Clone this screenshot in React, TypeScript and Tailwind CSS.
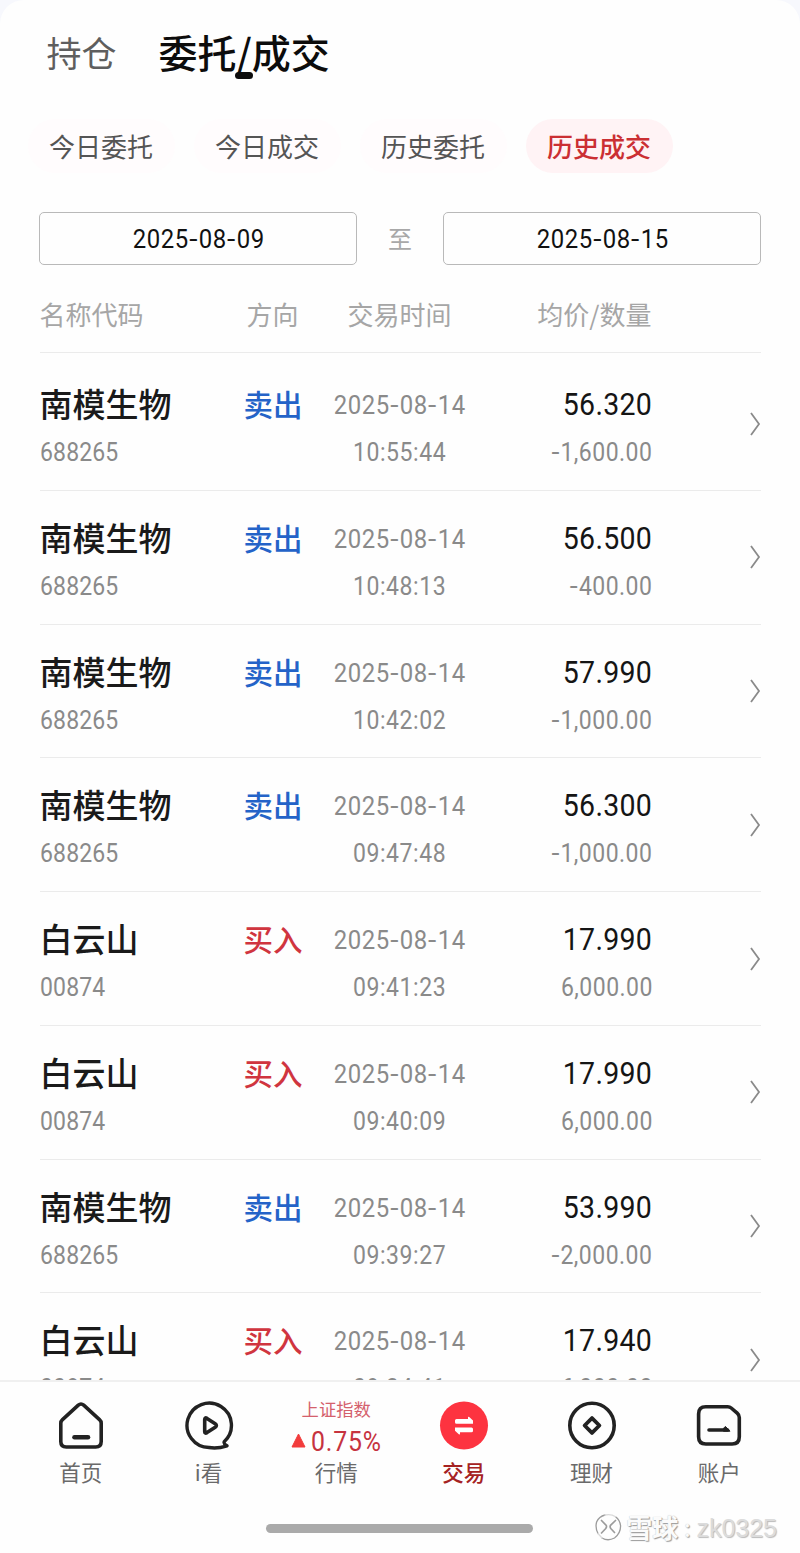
import type { ReactNode } from "react";

type Trade = {
  name: string;
  code: string;
  side: "卖出" | "买入";
  time: string;
  price: string;
  qty: string;
};

const DATE = "2025-08-14";

const TRADES: Trade[] = [
  { name: "南模生物", code: "688265", side: "卖出", time: "10:55:44", price: "56.320", qty: "-1,600.00" },
  { name: "南模生物", code: "688265", side: "卖出", time: "10:48:13", price: "56.500", qty: "-400.00" },
  { name: "南模生物", code: "688265", side: "卖出", time: "10:42:02", price: "57.990", qty: "-1,000.00" },
  { name: "南模生物", code: "688265", side: "卖出", time: "09:47:48", price: "56.300", qty: "-1,000.00" },
  { name: "白云山", code: "00874", side: "买入", time: "09:41:23", price: "17.990", qty: "6,000.00" },
  { name: "白云山", code: "00874", side: "买入", time: "09:40:09", price: "17.990", qty: "6,000.00" },
  { name: "南模生物", code: "688265", side: "卖出", time: "09:39:27", price: "53.990", qty: "-2,000.00" },
  { name: "白云山", code: "00874", side: "买入", time: "09:34:41", price: "17.940", qty: "6,000.00" },
];

const TABS = ["今日委托", "今日成交", "历史委托", "历史成交"];

const COLS = "grid grid-cols-[204px_86px_140px_182px_1fr]";

/* Slightly condensed digits, with the hyphen drawn wider than the font's own. */
function Num({ text, className = "" }: { text: string; className?: string }) {
  return (
    <span className={`block scale-x-[0.92] whitespace-nowrap font-[Roboto,sans-serif] ${className}`}>
      {text.split(/(-)/).map((part, i) =>
        part === "-" ? (
          <span key={i} className="inline-block w-[0.42em] origin-center scale-x-125 text-center">
            -
          </span>
        ) : (
          part
        ),
      )}
    </span>
  );
}

function DateBox({ value }: { value: string }) {
  return (
    <div className="flex h-[53px] w-[318px] items-center justify-center rounded-[5px] border border-[#b9b9b9]">
      <Num text={value} className="pt-[2px] pl-[1px] text-[26px] tracking-[0.6px] text-[#111]" />
    </div>
  );
}

function TradeRow({ trade }: { trade: Trade }) {
  const sideColor = trade.side === "卖出" ? "text-[#2463c8]" : "text-[#d0353f]";
  return (
    <div className={`${COLS} h-[133.75px] shrink-0 border-b border-[#ebebeb] pt-[23px]`}>
      <div>
        <div className="h-[48px] text-[33px] leading-[47px] font-medium text-[#1a1a1a]">{trade.name}</div>
        <Num text={trade.code} className="origin-left text-[25px] leading-[50px] tracking-[0.15px] text-[#8a8a8a]" />
      </div>
      <div className={`text-[29.5px] leading-[46px] font-medium ${sideColor}`}>{trade.side}</div>
      <div className="flex flex-col items-center text-[#8a8a8a]">
        <Num text={DATE} className="pl-[1px] text-[26px] leading-[50px] tracking-[0.6px]" />
        <Num text={trade.time} className="pl-[1px] text-[25px] leading-[46px] tracking-[0.6px]" />
      </div>
      <div className="-mr-[1px] flex flex-col items-end">
        <Num text={trade.price} className="origin-right text-[31px] leading-[49px] tracking-[0.3px] text-[#151515]" />
        <Num text={trade.qty} className="origin-right text-[25px] leading-[48px] tracking-[0.5px] text-[#8a8a8a]" />
      </div>
      <div className="flex justify-end pt-[31.5px]">
        <svg width="12" height="24" viewBox="0 0 12 24" fill="none" stroke="#8a8a8a" strokeWidth="1.8">
          <path d="M2 1 10 12 2 23" />
        </svg>
      </div>
    </div>
  );
}

function NavItem({ label, icon, active = false }: { label: string; icon: ReactNode; active?: boolean }) {
  return (
    <div className="flex flex-1 flex-col items-center">
      <div className="flex h-[74px] items-start justify-center pt-[18px]">{icon}</div>
      <div className={`text-[21.5px] leading-[32px] ${active ? "font-medium text-[#a52222]" : "text-[#6a6a6a]"}`}>
        {label}
      </div>
    </div>
  );
}

const stroke = {
  width: 50,
  height: 50,
  viewBox: "0 0 50 50",
  fill: "none",
  stroke: "#222",
  strokeWidth: 3.6,
  strokeLinecap: "round",
  strokeLinejoin: "round",
} as const;

const HomeIcon = () => (
  <svg {...stroke}>
    <path d="M22.3 5.2 6.5 19.7C5.4 20.7 4.8 21.7 4.8 23.3V41.5Q4.8 47 10.3 47H39.7Q45.2 47 45.2 41.5V23.3C45.2 21.7 44.6 20.7 43.5 19.7L27.7 5.2Q25 2.8 22.3 5.2Z" />
    <path d="M18.5 37.2H32" strokeWidth="4.6" />
  </svg>
);

const VideoIcon = () => (
  <svg {...stroke}>
    <path d="M40.2 41.7A22.2 22.2 0 1 0 25 47.5C31.5 48.6 37.5 47.6 43 45.8C41.5 44.9 39.4 44 40.2 41.7Z" strokeWidth="3.4" />
    <path d="M20.7 19.6V31.4Q20.7 34 23 32.6L31.2 27.2Q33.6 25.5 31.2 23.8L23 18.4Q20.7 17 20.7 19.6Z" />
  </svg>
);

const TradeIcon = () => (
  <svg width="50" height="50" viewBox="0 0 50 50">
    <circle cx="25" cy="25.5" r="24" fill="#fd3340" />
    <path
      d="M17.5 18.9H29V17.4Q29 16.2 30.2 17L34 20.4V23.7H17.5Q16 23.7 16 22.2V20.4Q16 18.9 17.5 18.9ZM32.5 27.4H16V30.7L19.8 34.2Q21 35 21 33.7V32.2H32.5Q34 32.2 34 30.7V28.9Q34 27.4 32.5 27.4Z"
      fill="#fff"
    />
  </svg>
);

const WealthIcon = () => (
  <svg {...stroke}>
    <circle cx="25" cy="25.5" r="22.2" />
    <path d="M25 18.1 32.4 25.5 25 32.9 17.6 25.5Z" strokeWidth="3.8" />
  </svg>
);

const AccountIcon = () => (
  <svg {...stroke}>
    <path d="M11.8 6.8H33.7Q35.8 6.8 37.2 8L43.2 13.2Q45.3 15 45.3 17.6V36.8Q45.3 44 38.1 44H11.8Q4.6 44 4.6 36.8V14Q4.6 6.8 11.8 6.8Z" />
    <path d="M15 30H33.6" />
    <path d="M29.8 28 31.4 26.4 36 31.2H29.8Z" fill="#222" strokeWidth="1" />
  </svg>
);

const SnowballLogo = () => (
  <svg width="28" height="28" viewBox="0 0 28 28" fill="none" stroke="#9c9c9c" strokeWidth="1.3" strokeLinecap="round">
    <path d="M11 2Q5 3.5 2.6 9Q1 15 4 20.5M8 25Q14 28.5 20.5 25Q26.5 20.5 26.6 13Q26 7 21.5 3.8" />
    <path d="M4 20.5 8 25M11 2Q17 0.5 21.5 3.8" stroke="#dadada" />
    <path d="M7.5 7.5 12.3 12.5Q13 14 11.5 15.8L7.5 20M21.5 7.5 16.5 12.3Q15.5 14 17 15.8L20.5 19.5" strokeWidth="1.7" />
  </svg>
);

export default function App() {
  return (
    <div className="h-[1553px] w-[800px] overflow-hidden bg-[#f7f8fd] font-['Noto_Sans_CJK_SC',sans-serif]">
      <div className="flex h-full flex-col rounded-t-[24px] bg-[#fefefe]">
        <header className="flex h-[108px] shrink-0 items-center pb-[5px] pl-[46.5px]">
          <div className="text-[35px] leading-none text-[#5e5e5e]">持仓</div>
          <div className="relative ml-[42px] text-[39px] leading-none font-medium text-[#0c0c0c]">
            委托/成交
            <span className="absolute -bottom-[8px] left-1/2 h-[7px] w-[18px] -translate-x-1/2 rounded-full bg-[#0c0c0c]" />
          </div>
        </header>

        <nav className="flex h-[76px] shrink-0 items-center gap-[19px] pl-[27.5px]">
          {TABS.map((tab, i) => (
            <div
              key={tab}
              className={`flex h-[54px] w-[147px] items-center justify-center rounded-full pb-[2px] text-[26px] ${
                i === 3 ? "bg-[#fff3f5] font-medium text-[#cb2f33]" : "bg-[#fffcfd] text-[#555]"
              }`}
            >
              {tab}
            </div>
          ))}
        </nav>

        <div className="mx-[39px] mt-[28px] flex shrink-0 items-center justify-between">
          <DateBox value="2025-08-09" />
          <span className="pb-[2px] text-[24px] leading-none text-[#a8a8a8]">至</span>
          <DateBox value="2025-08-15" />
        </div>

        <div className={`${COLS} mx-[39.5px] h-[88px] shrink-0 border-b border-[#ebebeb] text-[26px] leading-[97px] text-[#a6a6a6]`}>
          <div>名称代码</div>
          <div className="pl-[3px]">方向</div>
          <div className="text-center">交易时间</div>
          <div className="text-right">均价/数量</div>
        </div>

        <main className="flex min-h-0 flex-1 flex-col overflow-hidden px-[39.5px] pt-[4px]">
          {TRADES.map((t) => (
            <TradeRow key={t.time} trade={t} />
          ))}
        </main>

        <footer className="relative h-[173px] shrink-0 border-t-2 border-[#f0f0f0]">
          <div className="flex px-[17px]">
            <NavItem label="首页" icon={<HomeIcon />} />
            <NavItem label="i看" icon={<VideoIcon />} />
            <NavItem
              label="行情"
              icon={
                <div className="-mt-[4px] flex flex-col items-center">
                  <div className="text-[17.3px] leading-[25px] text-[#d4606c]">上证指数</div>
                  <div className="flex items-center gap-[5px]">
                    <svg width="15" height="15" viewBox="0 0 15 15">
                      <path d="M7.5 1 14 14H1Z" fill="#f23c3c" stroke="#f23c3c" strokeLinejoin="round" />
                    </svg>
                    <Num text="0.75%" className="-mr-[6px] origin-left pt-[3px] text-[27px] leading-[36px] tracking-[0.9px] text-[#c6333f]" />
                  </div>
                </div>
              }
            />
            <NavItem label="交易" icon={<TradeIcon />} active />
            <NavItem label="理财" icon={<WealthIcon />} />
            <NavItem label="账户" icon={<AccountIcon />} />
          </div>
          <div className="mx-auto mt-[36px] h-[9px] w-[267px] -translate-x-[1px] rounded-full bg-[#aaa]" />
          <div className="absolute right-[23px] bottom-[12px] flex h-[28px] items-center text-[#fbfbfb] [text-shadow:1px_1px_1px_#999,0_0_1px_#bbb]">
            <SnowballLogo />
            <span className="ml-[4px] text-[26px] leading-none font-bold">雪球</span>
            <span className="w-[18px] text-center text-[24px] leading-none">:</span>
            <span className="pt-[2px] font-['Liberation_Sans',sans-serif] text-[25px] leading-none text-[#dcdcdc] [text-shadow:1px_1px_1px_#bbb]">
              zk0325
            </span>
          </div>
        </footer>
      </div>
    </div>
  );
}
